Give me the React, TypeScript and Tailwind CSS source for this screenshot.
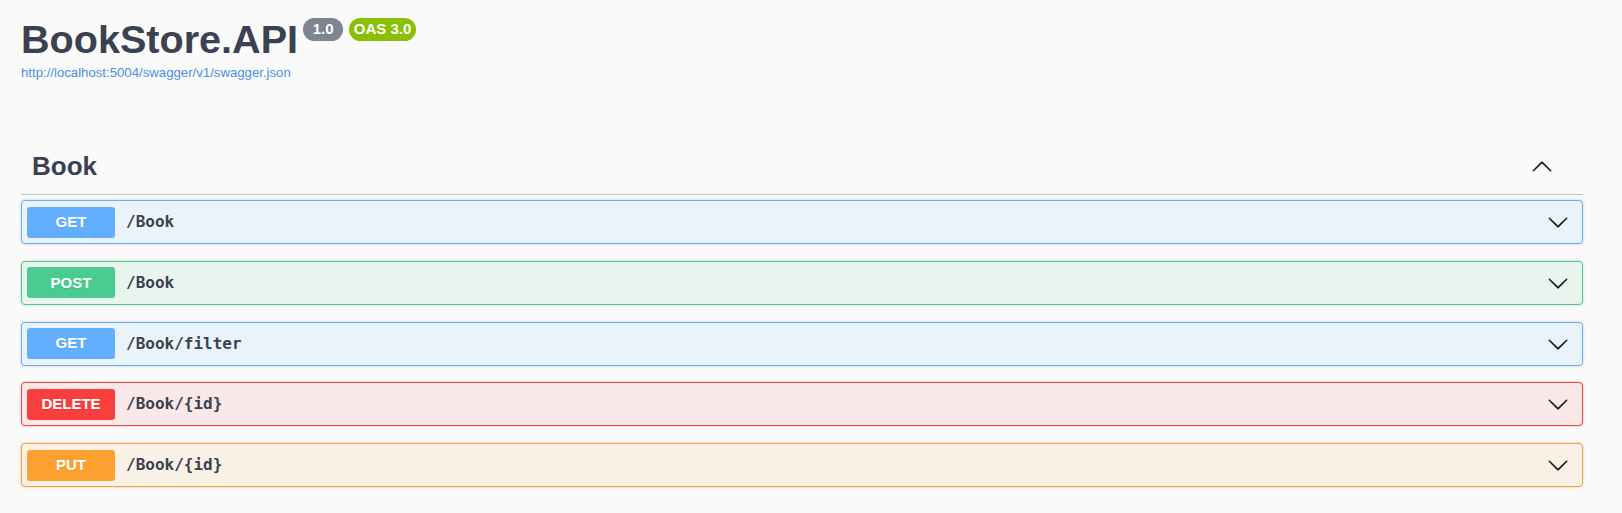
import React from 'react';

type Op = {
  method: string;
  path: string;
  badge: string;
  row: string;
};

const ops: Op[] = [
  { method: 'GET', path: '/Book', badge: 'bg-[#61affe]', row: 'bg-[#ebf3fa] border-[#61affe]' },
  { method: 'POST', path: '/Book', badge: 'bg-[#49cc90]', row: 'bg-[#e8f5ef] border-[#49cc90]' },
  { method: 'GET', path: '/Book/filter', badge: 'bg-[#61affe]', row: 'bg-[#ebf3fa] border-[#61affe]' },
  { method: 'DELETE', path: '/Book/{id}', badge: 'bg-[#f93e3e]', row: 'bg-[#fae7e7] border-[#f93e3e]' },
  { method: 'PUT', path: '/Book/{id}', badge: 'bg-[#fca130]', row: 'bg-[#faf1e6] border-[#fca130]' },
];

const Arrow: React.FC<{ up?: boolean }> = ({ up }) => (
  <svg
    viewBox="0 0 20 20"
    className={`w-[22px] h-[22px] shrink-0 ${up ? 'rotate-180' : ''}`}
    aria-hidden="true"
  >
    <path
      fill="#1b1b1b"
      d="M17.418 6.109c.272-.268.709-.268.979 0s.271.701 0 .969l-7.908 7.83c-.27.268-.707.268-.979 0l-7.908-7.83c-.27-.268-.27-.701 0-.969.271-.268.709-.268.979 0L10 13.25l7.418-7.141z"
    />
  </svg>
);

export default function App() {
  return (
    <div className="min-h-screen bg-[#fafafa] font-['Liberation_Sans',Arial,sans-serif] text-[#3b4151]">
      <div className="pl-[21px] pr-[39px]">
        {/* Info */}
        <div className="pt-[19px]">
          <div className="flex items-start">
            <h1 className="text-[39.6px] leading-[40px] font-bold text-[#3b4151]">
              BookStore.API
            </h1>
            <span className="ml-[5px] mt-[-1px] flex h-[23px] w-[40px] items-center justify-center rounded-full bg-[#7d8492] text-[15px] font-bold text-white">
              1.0
            </span>
            <span className="ml-[6px] mt-[-1px] flex h-[23px] w-[67px] items-center justify-center rounded-full bg-[#89bf04] text-[15px] font-bold text-white">
              OAS 3.0
            </span>
          </div>
          <a
            href="#"
            className="mt-[6px] block text-[13.2px] leading-[16px] text-[#4990e2]"
          >
            http://localhost:5004/swagger/v1/swagger.json
          </a>
        </div>

        {/* Tag section */}
        <div className="mt-[58px]">
          <div className="flex h-[56px] items-center justify-between border-b border-[#c1c3c7] pl-[11px] pr-[30px]">
            <h3 className="text-[26px] font-bold text-[#3b4151]">Book</h3>
            <Arrow up />
          </div>

          <div className="mt-[5px] flex flex-col gap-[16.75px]">
            {ops.map((op, i) => (
              <div
                key={i}
                className={`flex h-[44px] items-center rounded-[4px] border pl-[5px] pr-[13px] shadow-[0_0_3px_rgba(0,0,0,0.19)] ${op.row}`}
              >
                <span
                  className={`flex h-[31px] w-[88px] items-center justify-center rounded-[3px] text-[15px] font-bold text-white [text-shadow:0_1px_0_rgba(0,0,0,0.1)] ${op.badge}`}
                >
                  {op.method}
                </span>
                <span className="ml-[11px] flex-1 font-['DejaVu_Sans_Mono',monospace] text-[16px] font-bold text-[#3b4151]">
                  {op.path}
                </span>
                <Arrow />
              </div>
            ))}
          </div>
        </div>
      </div>
    </div>
  );
}
